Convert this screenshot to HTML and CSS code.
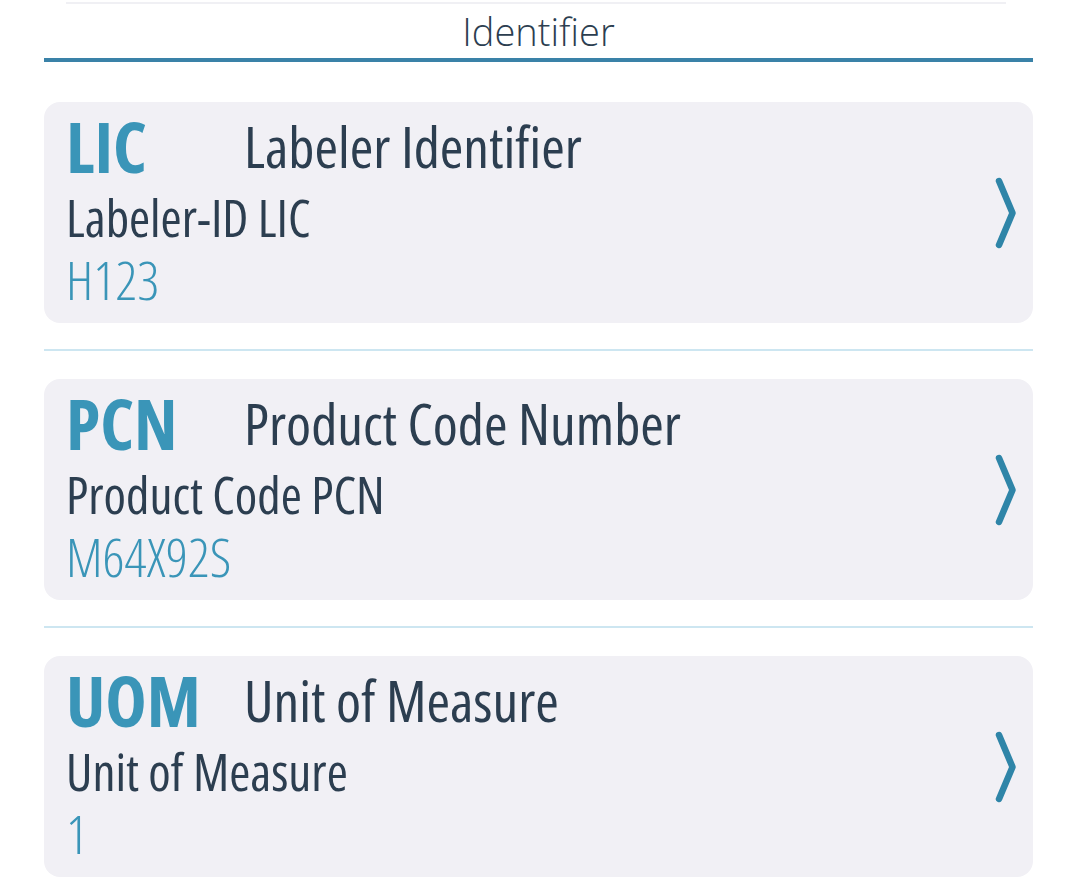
FILE: index.html
```html
<!DOCTYPE html>
<html>
<head>
<meta charset="utf-8">
<link rel="stylesheet" href="styles.css">
</head>
<body>
<div class="page">
  <div class="topline"></div>
  <div class="title">Identifier</div>
  <div class="titlebar"></div>
  <div class="list">
    <div class="card">
      <div class="info">
        <div class="head"><span class="code">LIC</span><span class="name">Labeler Identifier</span></div>
        <div class="desc">Labeler-ID LIC</div>
        <div class="value">H123</div>
      </div>
      <svg class="chev" viewBox="0 0 22 72" width="22" height="72"><path d="M4 4 L17.5 36 L4 68" fill="none" stroke="#2f85a8" stroke-width="6.5" stroke-linecap="round" stroke-linejoin="round"/></svg>
    </div>
    <div class="sep"></div>
    <div class="card">
      <div class="info">
        <div class="head"><span class="code">PCN</span><span class="name">Product Code Number</span></div>
        <div class="desc">Product Code PCN</div>
        <div class="value">M64X92S</div>
      </div>
      <svg class="chev" viewBox="0 0 22 72" width="22" height="72"><path d="M4 4 L17.5 36 L4 68" fill="none" stroke="#2f85a8" stroke-width="6.5" stroke-linecap="round" stroke-linejoin="round"/></svg>
    </div>
    <div class="sep"></div>
    <div class="card">
      <div class="info">
        <div class="head"><span class="code">UOM</span><span class="name">Unit of Measure</span></div>
        <div class="desc">Unit of Measure</div>
        <div class="value">1</div>
      </div>
      <svg class="chev" viewBox="0 0 22 72" width="22" height="72"><path d="M4 4 L17.5 36 L4 68" fill="none" stroke="#2f85a8" stroke-width="6.5" stroke-linecap="round" stroke-linejoin="round"/></svg>
    </div>
  </div>
</div>
</body>
</html>
```
FILE: styles.css
```css
html, body {
  margin: 0;
  padding: 0;
  background: #ffffff;
}
body {
  font-family: "Open Sans", "Roboto Condensed", "Liberation Sans", sans-serif;
  font-stretch: 75%;
  color: #2c3e50;
}
.page {
  padding: 0 45px 0 44px;
}
.topline {
  height: 2px;
  margin: 2px 27px 0 22px;
  background: #f0f0f4;
}
.title {
  text-align: center;
  font-size: 38px;
  font-stretch: 100%;
  font-weight: 300;
  line-height: 54px;
  color: #2c3e50;
}
.titlebar {
  height: 4px;
  background: #3a82a8;
}
.list {
  padding-top: 40px;
  display: flex;
  flex-direction: column;
}
.card {
  background: #f1f0f5;
  border-radius: 16px;
  height: 221px;
  box-sizing: border-box;
  padding: 0 16px 0 22px;
  display: flex;
  align-items: center;
}
.info {
  flex: 1;
  align-self: flex-start;
  padding-top: 5px;
}
.head {
  display: flex;
  align-items: center;
  height: 78px;
}
.code {
  width: 178px;
  flex: none;
  font-size: 70px;
  line-height: 1;
  font-weight: 700;
  color: #3a95b8;
}
.name {
  font-size: 57px;
  line-height: 1;
  color: #2c3e50;
}
.desc {
  font-size: 51px;
  line-height: 64px;
  font-weight: 370;
}
.value {
  font-size: 54px;
  line-height: 60px;
  font-weight: 360;
  color: #3a95b8;
}
.chev {
  flex: none;
}
.sep {
  height: 2px;
  background: #cde6f1;
  margin: 26px 0 28px 0;
}
```
